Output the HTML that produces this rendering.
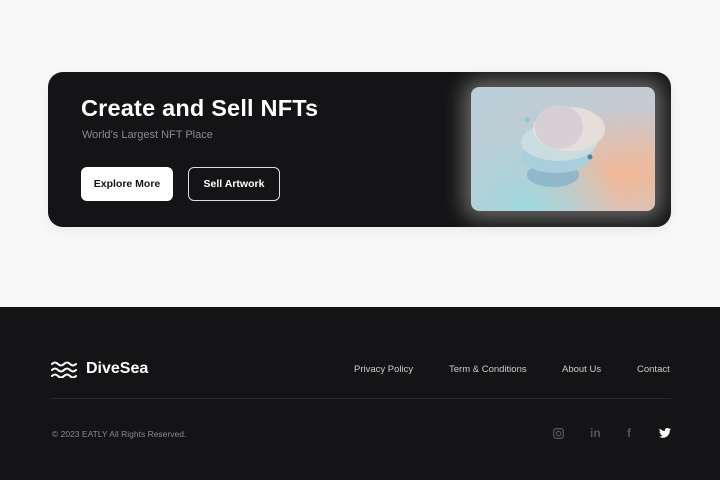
<!DOCTYPE html>
<html><head><meta charset="utf-8"><style>
*{margin:0;padding:0;box-sizing:border-box}
body{width:720px;height:480px;background:#f8f8f8;font-family:"Liberation Sans",sans-serif;position:relative;overflow:hidden}
.banner{position:absolute;left:48px;top:72px;width:623px;height:155px;background:#141416;border-radius:15px;box-shadow:0 4px 12px rgba(0,0,0,.06)}
h1{position:absolute;left:81px;top:95px;color:#fff;font-size:23.5px;font-weight:bold;letter-spacing:.2px}
.sub{position:absolute;left:82px;top:129px;color:#8a8a8e;font-size:11px}
.btn{position:absolute;top:167px;height:34px;border-radius:6px;font-size:10.5px;font-weight:bold;display:flex;align-items:center;justify-content:center}
.b1{left:81px;width:92px;background:#fff;color:#141416}
.b2{left:188px;width:92px;border:1.2px solid #ddd;color:#fff}
.img{position:absolute;left:471px;top:87px;width:184px;height:124px;border-radius:8px;overflow:hidden;
background:radial-gradient(ellipse at 30% 100%,#9ed8df 0%,rgba(158,216,223,0) 50%),radial-gradient(ellipse at 85% 70%,#f2b896 0%,rgba(242,184,150,0) 55%),linear-gradient(135deg,#b8cfd9,#cfc6cc);
box-shadow:0 0 20px 8px rgba(230,225,220,.4)}
footer{position:absolute;left:0;top:307px;width:720px;height:173px;background:#141416}
.logo{position:absolute;left:51px;top:361px}
.brand{position:absolute;left:86px;top:360px;color:#fff;font-size:16px;font-weight:bold}
.nav{position:absolute;top:364px;color:#ccc;font-size:9.5px}
.hr{position:absolute;left:51px;top:398px;width:620px;height:1px;background:#2a2a2e}
.copy{position:absolute;left:52px;top:429px;color:#8a8a8e;font-size:8.5px}
</style></head><body>
<div class="banner"></div>
<h1>Create and Sell NFTs</h1>
<div class="sub">World’s Largest NFT Place</div>
<div class="btn b1">Explore More</div>
<div class="btn b2">Sell Artwork</div>
<div class="img"><svg width="184" height="124" viewBox="0 0 184 124">
<ellipse cx="82" cy="88" rx="26" ry="12" fill="#86b2c8" opacity=".8"/>
<ellipse cx="85" cy="70" rx="34" ry="16" fill="#a9cfdc"/>
<ellipse cx="88" cy="55" rx="38" ry="19" fill="#c9dde0"/>
<ellipse cx="98" cy="42" rx="36" ry="22" fill="#e6dfd9"/>
<ellipse cx="88" cy="40" rx="24" ry="22" fill="#d6d0d6"/>
<circle cx="56" cy="33" r="2.5" fill="#8bc3d4"/><circle cx="119" cy="70" r="2.5" fill="#4a8aa8"/>
</svg></div>
<footer></footer>
<svg class="logo" width="27" height="17" viewBox="0 0 27 17" fill="none" stroke="#fff" stroke-width="2" stroke-linecap="round"><path d="M1 3q3-3 6 0t6 0t6 0t6 0"/><path d="M1 9q3-3 6 0t6 0t6 0t6 0"/><path d="M1 15q3-3 6 0t6 0t6 0t6 0"/></svg>
<div class="brand">DiveSea</div>
<div class="nav" style="left:354px">Privacy Policy</div>
<div class="nav" style="left:449px">Term &amp; Conditions</div>
<div class="nav" style="left:562px">About Us</div>
<div class="nav" style="left:637px">Contact</div>
<div class="hr"></div>
<div class="copy">© 2023 EATLY All Rights Reserved.</div>
<svg style="position:absolute;left:553px;top:428px" width="11" height="11" viewBox="0 0 11 11" fill="none" stroke="#555" stroke-width="1.3"><rect x=".7" y=".7" width="9.6" height="9.6" rx="2.5"/><circle cx="5.5" cy="5.5" r="2.2"/></svg>
<div style="position:absolute;left:590px;top:426px;color:#555;font-size:12px;font-weight:bold">in</div>
<div style="position:absolute;left:627px;top:426px;color:#555;font-size:12px;font-weight:bold">f</div>
<svg style="position:absolute;left:659px;top:428px" width="12" height="10" viewBox="0 0 24 20"><path fill="#fff" d="M24 2.4a10 10 0 0 1-2.8.8A5 5 0 0 0 23.3.4a10 10 0 0 1-3.1 1.2A4.9 4.9 0 0 0 11.8 6 14 14 0 0 1 1.7.9a4.9 4.9 0 0 0 1.5 6.6A4.9 4.9 0 0 1 1 6.9a4.9 4.9 0 0 0 3.9 4.8 5 5 0 0 1-2.2.1 4.9 4.9 0 0 0 4.6 3.4A9.9 9.9 0 0 1 0 17.3 14 14 0 0 0 7.5 19.5c9.1 0 14-7.5 14-14v-.6A10 10 0 0 0 24 2.4z"/></svg>
</body></html>
